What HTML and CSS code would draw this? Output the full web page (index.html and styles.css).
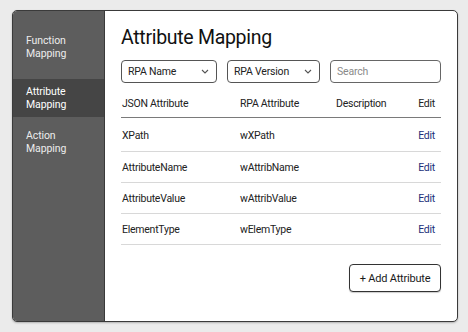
FILE: index.html
```html
<!DOCTYPE html>
<html>
<head>
<meta charset="utf-8">
<link rel="stylesheet" href="styles.css">
</head>
<body>
<div class="window">
  <nav class="sidebar">
    <div class="nav-item first">Function<br>Mapping</div>
    <div class="nav-item active">Attribute<br>Mapping</div>
    <div class="nav-item">Action<br>Mapping</div>
  </nav>
  <main class="main">
    <h1 class="title">Attribute Mapping</h1>
    <div class="filters">
      <div class="select"><span>RPA Name</span><svg class="chev" width="8" height="5" viewBox="0 0 8 5"><path d="M1 1 L4 4 L7 1" fill="none" stroke="#555" stroke-width="1.1"/></svg></div>
      <div class="select"><span>RPA Version</span><svg class="chev" width="8" height="5" viewBox="0 0 8 5"><path d="M1 1 L4 4 L7 1" fill="none" stroke="#555" stroke-width="1.1"/></svg></div>
      <div class="search">Search</div>
    </div>
    <div class="table">
      <div class="row head">
        <span>JSON Attribute</span><span>RPA Attribute</span><span>Description</span><span class="edit-h">Edit</span>
      </div>
      <div class="row first-row">
        <span>XPath</span><span>wXPath</span><span></span><span class="edit">Edit</span>
      </div>
      <div class="row">
        <span>AttributeName</span><span>wAttribName</span><span></span><span class="edit">Edit</span>
      </div>
      <div class="row">
        <span>AttributeValue</span><span>wAttribValue</span><span></span><span class="edit">Edit</span>
      </div>
      <div class="row">
        <span>ElementType</span><span>wElemType</span><span></span><span class="edit">Edit</span>
      </div>
    </div>
    <div class="actions">
      <button class="add-btn">+ Add Attribute</button>
    </div>
  </main>
</div>
</body>
</html>
```
FILE: styles.css
```css
* { box-sizing: border-box; }
html, body { margin: 0; padding: 0; }
body {
  background: #ebebeb;
  font-family: Roboto, "Liberation Sans", sans-serif;
  color: #222;
  padding: 10px 10px 0 12px;
  width: 468px;
  height: 332px;
}
.window {
  width: 446px;
  height: 312px;
  border: 1px solid #3a3a3a;
  border-radius: 5px;
  overflow: hidden;
  display: flex;
  background: #fff;
  box-shadow: 0 1px 2px rgba(0,0,0,0.25);
}
.sidebar {
  width: 92px;
  flex: none;
  background: #5d5d5d;
  border-right: 1px solid #3a3a3a;
  padding-top: 17px;
}
.nav-item {
  color: #ececec;
  font-size: 10.5px;
  line-height: 13px;
  padding: 6px 13px;
  letter-spacing: -0.1px;
}
.nav-item.first { margin-bottom: 13px; }
.nav-item.active {
  background: #454545;
  color: #fff;
  margin-bottom: 6px;
}
.main {
  flex: 1;
  padding: 15px 16px 0 16px;
}
.title {
  margin: 0;
  font-size: 19.5px;
  line-height: 24px;
  font-weight: 400;
  letter-spacing: -0.3px;
  color: #111;
}
.filters {
  display: grid;
  grid-template-columns: 96px 93px 1fr;
  gap: 10px;
  margin-top: 10px;
}
.select, .search {
  height: 23px;
  border: 1px solid #555;
  border-radius: 4px;
  font-size: 10.5px;
  letter-spacing: -0.2px;
  display: flex;
  align-items: center;
  padding: 0 6px;
}
.select { justify-content: space-between; color: #222; }
.search { color: #8a8a8a; border-color: #666; }
.chev { margin-right: 1px; }
.table { margin-top: 6px; }
.row {
  display: grid;
  grid-template-columns: 118px 96px 1fr auto;
  align-items: center;
  height: 31px;
  padding: 0 6px 0 1px;
  font-size: 10.5px;
  letter-spacing: -0.25px;
  border-bottom: 1px solid #d8d8d8;
}
.row.head {
  height: 29px;
  padding-top: 1px;
  border-bottom: 1px solid #7a7a7a;
}
.row.first-row { height: 34px; padding-top: 1px; }
.edit { color: #22307a; }
.actions {
  display: flex;
  justify-content: flex-end;
  margin-top: 19px;
}
.add-btn {
  width: 92px;
  height: 28px;
  background: #fff;
  border: 1px solid #333;
  border-radius: 4px;
  font-family: Roboto, "Liberation Sans", sans-serif;
  font-size: 11px;
  letter-spacing: -0.2px;
  color: #1a1a1a;
  padding: 0;
  box-shadow: 0 1px 1px rgba(0,0,0,0.2);
}
```
